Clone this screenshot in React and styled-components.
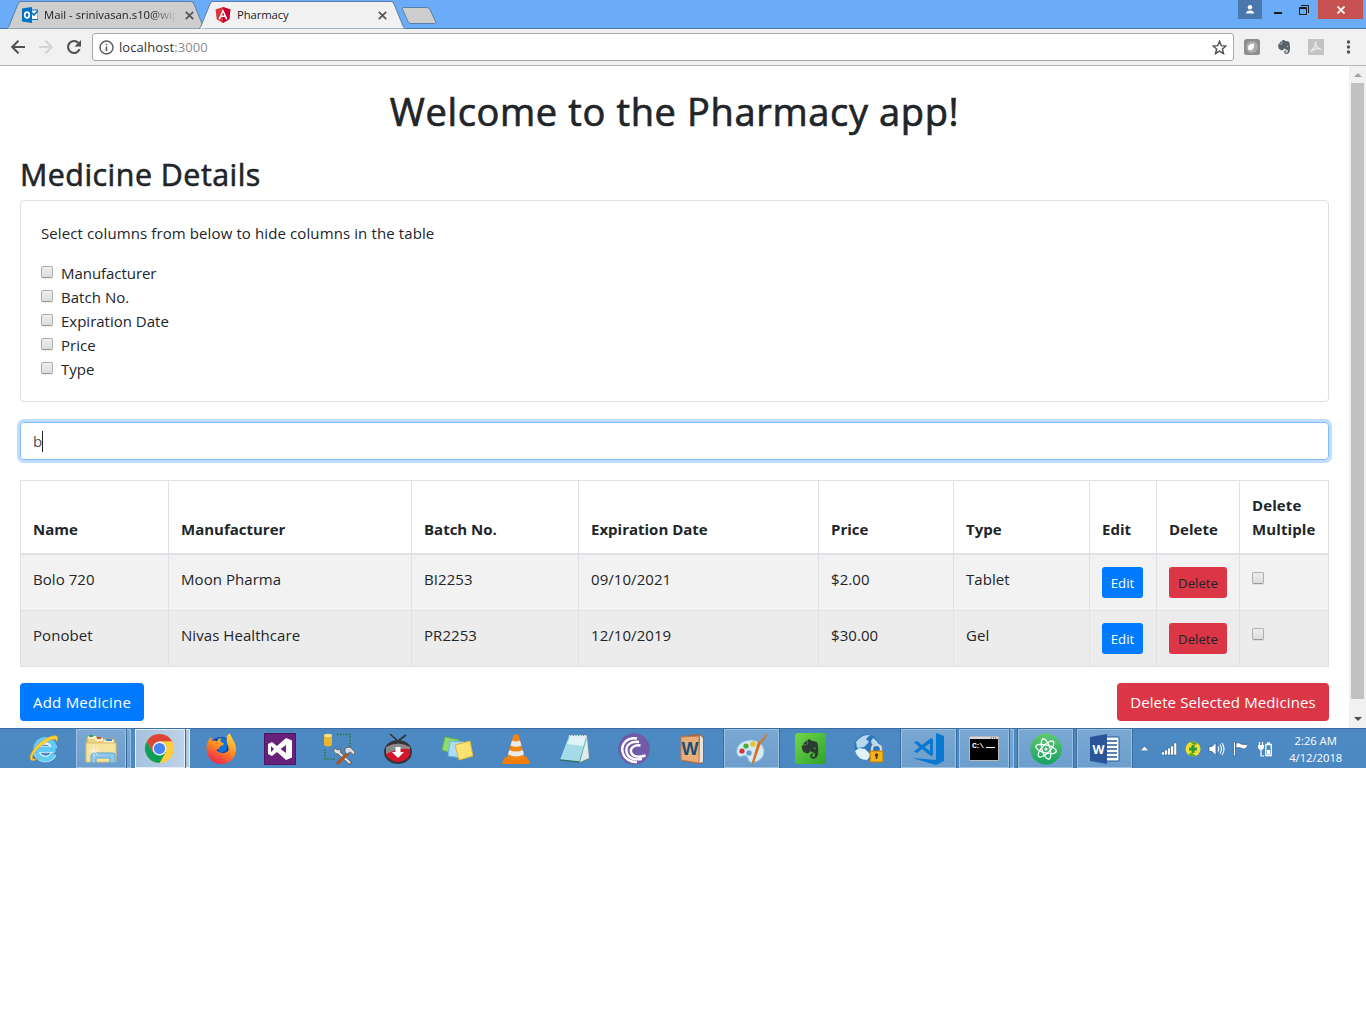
import React from 'react';
import styled, { createGlobalStyle, css } from 'styled-components';
import { FaEvernote } from 'react-icons/fa';

const Global = createGlobalStyle`
  * { box-sizing: border-box; }
  body { margin: 0; background: #fff; font-family: "Open Sans", "Noto Sans", sans-serif; font-size: 15px; line-height: 24px; color: #212529; }
  svg { display: block; flex: none; }
`;

const T = styled.span`
  letter-spacing: ${p => p.$ls || 0}px;
  white-space: nowrap;
`;

/* ---------- browser frame ---------- */
const Screen = styled.div`width: 1366px; height: 768px; display: flex; flex-direction: column; overflow: hidden;`;
const TabStrip = styled.div`height: 29px; background: #6aacf8; border-bottom: 1px solid #4a77ab; display: flex; padding-left: 7px;`;
const Tab = styled.div`
  display: grid; grid-template-columns: 100%; height: 29px; width: ${p => p.$w}px; margin-left: ${p => p.$ml || 0}px; z-index: ${p => (p.$active ? 2 : 1)};
  > * { grid-area: 1 / 1; }
`;
const TabContent = styled.div`
  display: flex; align-items: center; height: 29px; padding: 1px ${p => p.$pr}px 0 ${p => p.$pl}px; font-size: 11.3px; line-height: 16px; color: #222;
`;
const TabTitle = styled.div`
  flex: 1; min-width: 0; white-space: nowrap; margin: 0 8px 0 6px; letter-spacing: ${p => p.$ls || 0}px;
  ${p => p.$fade && css`-webkit-mask-image: linear-gradient(90deg, #000 80%, transparent 100%); mask-image: linear-gradient(90deg, #000 80%, transparent 100%);`}
`;
const NewTab = styled.div`margin: 7px 0 0 -4px; z-index: 3;`;
const WinControls = styled.div`margin-left: auto; display: flex; align-items: flex-start; padding-right: 3px;`;
const WinButton = styled.div`
  width: ${p => p.$w}px; height: 19px; background: ${p => p.$bg || 'transparent'}; display: flex; align-items: center; justify-content: center;
`;
const Toolbar = styled.div`height: 37px; background: #f1f1f1; border-bottom: 1px solid #b5b5b5; display: flex; align-items: center; padding: 0 10px;`;
const NavIcons = styled.div`display: flex; gap: 12px; margin-right: 10px;`;
const Omnibox = styled.div`
  flex: 1; height: 28px; background: #fff; border: 1px solid #a9a9a9; border-radius: 3px; display: flex; align-items: center; padding: 0 6px;
  font-size: 13px; color: #333; line-height: 18px;
`;
const Url = styled.div`flex: 1; margin-left: 5px; letter-spacing: ${p => p.$ls}px; span { color: #8a8a8a; }`;
const Extensions = styled.div`display: flex; align-items: center; gap: 16px; margin-left: 10px;`;

/* ---------- page ---------- */
const Viewport = styled.div`height: 662px; display: flex;`;
const Page = styled.main`width: 1349px; padding: 22px 20px 0; display: flex; flex-direction: column;`;
const Title = styled.h1`
  margin: 0; font-size: 38px; line-height: 46px; height: 48px; font-weight: 500; -webkit-text-stroke: .7px currentColor; text-align: center; letter-spacing: ${p => p.$ls}px;
`;
const Subtitle = styled.h2`margin: 20px 0 6px; font-size: 30.4px; line-height: 38px; font-weight: 500; -webkit-text-stroke: .6px currentColor; letter-spacing: ${p => p.$ls}px;`;
const Card = styled.section`height: 202px; border: 1px solid #dfdfdf; border-radius: 4px; padding: 20px;`;
const CardText = styled.p`margin: 0 0 16px;`;
const CheckRow = styled.label`display: flex; align-items: center; gap: 8px; height: 24px;`;
const Box = styled.span`
  width: 12px; height: 12px; margin-top: ${p => p.$mt || 0}px; border: 1px solid #b0b0b0; border-bottom-color: #9a9a9a; border-radius: 2px; flex: none; display: block;
  background: linear-gradient(#eee, #dcdcdc); box-shadow: 0 1px 0 rgba(0,0,0,.08);
`;
const Search = styled.div`
  height: 38px; margin: 20px 0; border: 1px solid #80bdff; border-radius: 4px; box-shadow: 0 0 0 3px #bfdeff;
  display: flex; align-items: center; padding: 0 12px; color: #495057;
`;
const Caret = styled.i`width: 1px; height: 21px; background: #222;`;
const Table = styled.table`
  width: 1309px; table-layout: fixed; border-collapse: separate; border-spacing: 0; border: 0 solid #dee2e6; border-width: 1px 1px 0 0;
`;
const Th = styled.th`
  height: 74px; padding: 12px 0 12px 12px; border-left: 1px solid #dee2e6; border-bottom: 2px solid #dee2e6; text-align: left; vertical-align: bottom; font-weight: 700;
`;
const Tr = styled.tr`background: ${p => (p.$hover ? '#ececec' : '#f2f2f2')};`;
const Td = styled.td`height: 56px; padding: 12px 0 0 12px; border-left: 1px solid #dee2e6; border-bottom: 1px solid #dee2e6; vertical-align: top;`;
const Button = styled.button`
  display: flex; align-items: center; justify-content: center; border: 0; padding: 0; font-family: inherit;
  width: ${p => p.$w}px; height: ${p => (p.$small ? 31 : 38)}px; border-radius: ${p => (p.$small ? 3 : 4)}px;
  font-size: ${p => (p.$small ? 13.2 : 15)}px; color: ${p => (p.$dark ? '#212529' : '#fff')}; background: ${p => (p.$danger ? '#dc3545' : '#007bff')};
`;
const Actions = styled.div`display: flex; justify-content: space-between; margin-top: 16px;`;
const Scrollbar = styled.div`width: 17px; background: #f1f1f1; display: flex; flex-direction: column; align-items: center;`;
const ScrollArrow = styled.div`height: ${p => p.$h}px; padding-top: ${p => p.$pt || 0}px; display: flex; align-items: center;`;
const Thumb = styled.div`width: 13px; height: 616px; background: #c1c1c1;`;

/* ---------- taskbar ---------- */
const Taskbar = styled.div`
  height: 40px; background: linear-gradient(#4c87bf, #4d8ac4 30%, #4b88c2); border-top: 1px solid #3a6ea5; display: flex; padding-left: 15px;
`;
const Slot = styled.div`flex: none; width: 58.92px; height: 39px; display: flex; align-items: center; justify-content: center;`;
const Frame = styled.div`
  width: 55px; height: 39px; border: 1px solid ${p => (p.$active ? '#e6eff8' : '#9dbfe0')}; outline: 1px solid #3b6c9e; outline-offset: 0;
  background: ${p => (p.$active ? 'linear-gradient(90deg,#a6c2de,#bdd2e8)' : 'linear-gradient(#7aa8d3,#6c9ecd)')};
  display: flex; align-items: center; justify-content: center;
`;
const Stack = styled.div`width: 55px; display: flex; gap: 1px; background: #3b6c9e;`;
const StackMain = styled(Frame)`width: 50px; outline: none;`;
const StackEdge = styled(Frame)`width: 4px; outline: none; border-left: 0;`;
const Tray = styled.div`display: flex; flex: none; align-items: center; gap: 7px; margin-left: 5.5px;`;
const Clock = styled.div`margin-left: 12px; flex: none; width: 60px; text-align: center; color: #fff; font-size: 11.3px; line-height: 17px; padding-top: 3px; letter-spacing: -.05px;`;

const TabShape = ({ w, fill }) => (
  <svg width={w} height="29" viewBox={`0 0 ${w} 29`}>
    <path d={`M0 28.5 Q1 28 2 26 L11 4 Q12 1.5 14 1.5 H${w - 14} Q${w - 12} 1.5 ${w - 11} 4 L${w - 2} 26 Q${w - 1} 28 ${w} 28.5 Z`} fill={fill} />
    <path d={`M0 28.5 Q1 28 2 26 L11 4 Q12 1.5 14 1.5 H${w - 14} Q${w - 12} 1.5 ${w - 11} 4 L${w - 2} 26 Q${w - 1} 28 ${w} 28.5`} fill="none" stroke="#5b7fa8" />
  </svg>
);
const CloseX = () => (
  <svg width="9" height="9" viewBox="0 0 9 9"><path d="M.8.8l7.4 7.4M8.2.8L.8 8.2" stroke="#555" strokeWidth="1.7" /></svg>
);
const Outlook = () => (
  <svg width="16" height="16" viewBox="0 0 16 16">
    <path d="M7 3h9v9.5H7z" fill="#fff" stroke="#0072c6" /><path d="M8 4l4 4 4-4.500" fill="none" stroke="#0072c6" strokeWidth="1.6" />
    <path d="M0 1.600L10 0v16L0 14.400z" fill="#0072c6" /><ellipse cx="5" cy="8" rx="2.300" ry="2.900" fill="none" stroke="#fff" strokeWidth="1.700" />
  </svg>
);
const Angular = () => (
  <svg width="16" height="16" viewBox="0 0 16 16">
    <path d="M8 0l7.400 2.600-1.100 9.700L8 16l-6.300-3.700L.6 2.600z" fill="#dd3338" /><path d="M8 0l7.400 2.600-1.100 9.700L8 16z" fill="#c3002f" />
    <path d="M8 2L3.400 12.200h1.700l1-2.300h3.800l1 2.300h1.700zm0 3.200l1.300 3.300H6.700z" fill="#fff" fillRule="evenodd" />
  </svg>
);
const Arrow = ({ color, flip }) => (
  <svg width="16" height="16" viewBox="0 0 16 16"><g transform={flip ? 'translate(16 0) scale(-1 1)' : undefined}><path d="M15 8H2.500M8.500 1.800L2.200 8l6.300 6.200" fill="none" stroke={color} strokeWidth="2" /></g></svg>
);
const Reload = () => (
  <svg width="16" height="16" viewBox="0 0 16 16"><path d="M13.600 10.200A6 6 0 1 1 12.400 3.900" fill="none" stroke="#505050" strokeWidth="2.100" /><path d="M15 1v6.500H8.500z" fill="#505050" /></svg>
);

/* ---------- taskbar icons ---------- */
const I = ({ children, w = 32, h = 32 }) => <svg width={w} height={h} viewBox="0 0 32 32">{children}</svg>;

const Ie = () => (
  <I>
    <path d="M26.500 16.500H8.500M8.500 17.500A9 9 0 0 0 25.500 21M8.500 15.500A9 9 0 0 1 26 15.500" fill="none" stroke="#dff6ff" strokeWidth="6.500" />
    <path d="M27.500 16.500H8.500M8.300 17.500A9 9 0 0 0 25.500 21M8.300 15.500A9 9 0 0 1 26.300 15.500" fill="none" stroke="#62cbf5" strokeWidth="5" />
    <path d="M4 27.500C-1 26 5 15 13 9 20 3.500 28 1 29.500 4c.5 1.500 0 3-.8 4.500C28.500 5 24 5.500 17.500 9.500 9 15 3 23 4.500 25.500c.8 1 2.500.8 5 0-2 1.300-4 2.200-5.500 2z" fill="#fbd23c" stroke="#e6a81c" strokeWidth=".7" />
  </I>
);
const Explorer = () => (
  <I>
    <path d="M2 4h10l2 2h15v22H2z" fill="#ecd283" stroke="#d2ad51" /><path d="M3 3h8v3H3z" fill="#f7edc5" /><path d="M4 2h4v2H4z" fill="#2fa84a" />
    <path d="M10 5h8v3h-8z" fill="#f7edc5" /><path d="M12 4h4v2h-4z" fill="#d44a3b" /><path d="M19 7h10v3H19z" fill="#f7edc5" /><path d="M21 6h6v2h-6z" fill="#3d8fd6" />
    <path d="M1 10h30v19H1z" fill="#f5e3a0" stroke="#dcbf66" /><path d="M6 30v-8q0-2 2-2h20q2 0 2 2v8h-5v-5H11v5z" fill="#92c9e9" stroke="#5fa3d0" />
    <path d="M9 12v12M3 18h12M5 14l8 8M13 14l-8 8" stroke="#fff" strokeWidth=".8" opacity=".8" />
  </I>
);
const Chrome = () => (
  <I w={31} h={31}>
    <circle cx="16" cy="16" r="15" fill="#ffcd40" />
    <path d="M3 8.500A15 15 0 0 0 16 31l6.500-11.200L16 16 9.500 19.800z" fill="#0f9d58" />
    <path d="M3 8.500A15 15 0 0 1 29 8.500H16L9.500 19.800z" fill="#db4437" /><circle cx="16" cy="16" r="7.200" fill="#f1f1f1" /><circle cx="16" cy="16" r="5.800" fill="#4285f4" />
  </I>
);
const Firefox = () => (
  <I>
    <defs><linearGradient id="fx" x1=".8" y1="0" x2=".3" y2="1"><stop offset="0" stopColor="#ffdd3c" /><stop offset=".5" stopColor="#ff8b20" /><stop offset="1" stopColor="#ed1f53" /></linearGradient></defs>
    <circle cx="16" cy="16" r="12" fill="#153a9f" /><path d="M12 5q8-2 11 5l-2 8-7 3z" fill="#0a75d8" />
    <path d="M1.500 14C2 9 4 6 6 4l1 4c2-.8 3.500-.7 5 .5 1-1.800 2-2.800 4-3.500-1 2-1 3.500 1 4.500l2 1c0 2-4 2.200-4.500 4 0 2-2 2-3 2 1 4 8 5 12 1 1-4-4-9-1-15 .5-1 1.300-1.800 2.500-2C26 5 31 9 31 16.500 31 25 24.500 31 16 31S1 24 1.500 14z" fill="url(#fx)" />
  </I>
);
const VisualStudio = () => (
  <I><path d="M.5.5h31v31H.5z" fill="#68217a" stroke="#4d1461" /><path d="M22 5l6 2.500v17L22 27l-9-8-5 4-4-2V11l4-2 5 4zM22 12l-5.500 4L22 20zM7 13v6l3-3z" fill="#fff" fillRule="evenodd" /></I>
);
const Tools = () => (
  <I>
    <path d="M14 1.500h13V14M2 16v10h10" fill="none" stroke="#277b2c" strokeWidth="1.500" strokeDasharray="1.500 1.500" />
    <path d="M1 2v10q4 3 8 0V2z" fill="#eab52c" /><ellipse cx="5" cy="2.500" rx="4" ry="1.800" fill="#ffe387" />
    <path d="M14 18l14 13" stroke="#666" strokeWidth="4" /><path d="M12 15q-3 4 2 6l3-1 1-4-3 1-2-1z" fill="#dfe5ea" stroke="#666" /><path d="M15 19l12 11" stroke="#e8ecef" strokeWidth="2" />
    <path d="M25 20L14 31" stroke="#a9572b" strokeWidth="3.300" /><path d="M22 15l5-1 5 5-1 3-4-3-3 2-2-2z" fill="#d9dfe3" stroke="#666" />
  </I>
);
const Ytd = () => (
  <I>
    <path d="M8 1l8 7 8-6" fill="none" stroke="#333" strokeWidth="1.600" /><ellipse cx="16" cy="19" rx="14" ry="12" fill="#353535" />
    <path d="M4 14q12-6 24 0v8q-5 7-12 7T4 22z" fill="#d4152c" /><path d="M4 14q12-7 24 0v2Q16 15 4 21z" fill="#8a8a8a" />
    <path d="M13.500 14h5v5h3.500l-6 6-6-6h3.500z" fill="#fff" />
  </I>
);
const Sticky = () => (
  <I>
    <path d="M4 4l14 3-4 14L1 17z" fill="#8fdc71" stroke="#62b84a" /><path d="M9 8l14 1-2 16-14-2z" fill="#a9dcf6" stroke="#6eb7de" /><path d="M14 12l15-4 3 15-14 4z" fill="#fbe373" stroke="#d6b53d" />
  </I>
);
const Vlc = () => (
  <I>
    <path d="M5 24h22l3 6q0 1-1 1H3q-1 0-1-1z" fill="#f07d0a" /><path d="M13.500 2q2.500-1.500 5 0L25 25q-9 5-18 0z" fill="#f28411" />
    <path d="M12 7.500q4 2 8 0l1.500 5q-5.500 2.500-11 0zM9.300 17q6.700 3 13.400 0l1.300 4.500q-8 4-16 0z" fill="#e9eaec" />
  </I>
);
const Notepad = () => (
  <I>
    <path d="M9 2h19l3 24-10 4z" fill="#5d8f8d" /><path d="M10 3h18L20 29 1 27z" fill="#a5dcea" /><path d="M12 3h15l-3 10L8 11z" fill="#dff4f9" /><path d="M28 4l2 21-9 4z" fill="#dfeceb" />
    <path d="M10 3.500h18" stroke="#e8e8e8" strokeWidth="3" strokeDasharray="1.500 1" /><path d="M1 27l19 2" stroke="#2f6f66" strokeWidth="1.500" />
  </I>
);
const BitTorrent = () => (
  <I>
    <circle cx="16" cy="16" r="15.800" fill="#6f5ba7" />
    <g fill="none" stroke="#fff" strokeWidth="2.400"><path d="M19 5.500C9 4 3 11 4.500 18.500S13 29.500 19 29" /><path d="M21 9C13 7.500 7.500 12.500 8.500 18.500s6.500 9 15.500 7.500" /><path d="M22.500 12.500c-6-1-10.500 2.500-9.500 6.500 1 4.500 7 6 14.500 3.500" /></g>
  </I>
);
const WordBook = () => (
  <I>
    <path d="M5 3l19-2 4 3v25l-5 2-17-3z" fill="#9b613e" /><path d="M24 2l3 3v24l-4 1z" fill="#e9e3d9" /><path d="M5 4l18-1v27L5 27z" fill="#e8ad79" stroke="#bd7a4d" />
    <text x="14" y="21.500" textAnchor="middle" fontSize="18" fontWeight="700" fontFamily="Liberation Sans, sans-serif" fill="#174d78" textLength="17" lengthAdjust="spacingAndGlyphs">W</text>
  </I>
);
const Paint = () => (
  <I>
    <path d="M2 21C0 12 8 7 16 7s14 6 13 13-10 11-14 9c-3-2-1-5-4-6s-7 3-9-2z" fill="#d3ebf6" stroke="#8bbbd5" />
    <circle cx="7" cy="18" r="2.600" fill="#d73537" /><circle cx="11" cy="13" r="2.600" fill="#4cac38" /><circle cx="18" cy="11" r="2.800" fill="#e8c52c" /><circle cx="14" cy="20" r="2.700" fill="#6a9dce" />
    <path d="M26 10l-7 20q-2 2-2-1l6-21z" fill="#d77422" /><path d="M24 9L32 0q1 5-5 10z" fill="#b98253" />
  </I>
);
const EvernoteTile = styled.div`
  width: 31px; height: 31px; border-radius: 3px; background: linear-gradient(135deg,#72d648,#2da22c); color: #2e3b34; display: flex; align-items: center; justify-content: center; font-size: 22px;
`;
const Globe = () => (
  <I>
    <circle cx="14" cy="14" r="12.500" fill="#2d76ba" /><path d="M3 9q6-8 14-7l-4 4 3 3-5 5-7 1zM20 5q5 3 6 8l-4-2-3 1-1-4z" fill="#b9d8ee" />
    <path d="M2 18q3 9 12 9l4-5-6-6-6-1z" fill="#e3f1fa" /><path d="M19 19v-3q0-4 4.500-4t4.500 4v3" fill="none" stroke="#d9dcdf" strokeWidth="2.200" /><path d="M17 18h13v11H17z" fill="#f2b31d" stroke="#ba7a0d" /><circle cx="23.500" cy="22" r="1.700" fill="#563908" /><path d="M23.500 22v4" stroke="#563908" strokeWidth="1.600" />
  </I>
);
const VsCode = () => (
  <I>
    <path d="M24 0l8 3v25l-8 4L0 25l24 2z" fill="#0879cf" />
    <path d="M19 5l2 1v16l-2 1-9-7-5 4-3-1.500L7.500 14 2 9.500 5 8l5 4zM18 10.500L12.500 14l5.500 4z" fill="#0879cf" fillRule="evenodd" />
  </I>
);
const Cmd = () => (
  <svg width="30" height="25" viewBox="0 0 30 25">
    <path d="M.5.5h29v24H.5z" fill="#000" stroke="#b9b9b9" /><path d="M1 1h28v2H1z" fill="#d9d9d9" /><path d="M22 2h6" stroke="#444" strokeDasharray="1 1" />
    <text x="3" y="12" fontSize="8" fontFamily="Liberation Mono, monospace" fontWeight="700" fill="#fff" textLength="12">C:\</text><path d="M17 11.500h9" stroke="#fff" />
  </svg>
);
const Atom = () => (
  <I>
    <defs><linearGradient id="at" x1="0" y1="0" x2="0" y2="1"><stop offset="0" stopColor="#62c774" /><stop offset="1" stopColor="#16a25e" /></linearGradient></defs>
    <circle cx="16" cy="16" r="15.700" fill="url(#at)" />
    <g fill="none" stroke="#fff" strokeWidth="1.200"><ellipse cx="16" cy="16" rx="10.500" ry="4" transform="rotate(14 16 16)" /><ellipse cx="16" cy="16" rx="10.500" ry="4" transform="rotate(74 16 16)" /><ellipse cx="16" cy="16" rx="10.500" ry="4" transform="rotate(134 16 16)" /></g>
    <circle cx="16" cy="16" r="1.500" fill="#fff" />
  </I>
);
const Word = () => (
  <I>
    <path d="M16 4h14v24H16z" fill="#fff" stroke="#2a5699" /><path d="M18 8h10M18 12h10M18 16h10M18 20h10M18 24h10" stroke="#2a5699" strokeWidth="1.600" /><path d="M1 4L18 1v30L1 28z" fill="#2a5699" />
    <text x="9.500" y="20.500" textAnchor="middle" fontSize="13" fontWeight="700" fontFamily="Open Sans, sans-serif" fill="#fff" textLength="12" lengthAdjust="spacingAndGlyphs">W</text>
  </I>
);

const apps = [
  { icon: <Ie /> }, { icon: <Explorer />, stack: true }, { icon: <Chrome />, stack: true, active: true }, { icon: <Firefox /> }, { icon: <VisualStudio /> },
  { icon: <Tools /> }, { icon: <Ytd /> }, { icon: <Sticky /> }, { icon: <Vlc /> }, { icon: <Notepad /> }, { icon: <BitTorrent /> }, { icon: <WordBook /> },
  { icon: <Paint />, open: true }, { icon: <EvernoteTile><FaEvernote /></EvernoteTile> }, { icon: <Globe /> }, { icon: <VsCode />, open: true },
  { icon: <Cmd />, stack: true }, { icon: <Atom />, open: true }, { icon: <Word />, open: true },
];

const TaskItem = ({ app }) => (
  <Slot>
    {app.stack ? <Stack><StackMain $active={app.active}>{app.icon}</StackMain><StackEdge $active={app.active} /></Stack>
      : app.open ? <Frame>{app.icon}</Frame> : app.icon}
  </Slot>
);

const TrayIcons = () => (
  <Tray>
    <svg width="9" height="5" viewBox="0 0 9 5"><path d="M4.500.3L8.600 4.700H.4z" fill="#fff" stroke="#3a6793" strokeWidth=".5" /></svg>
    <svg width="22" height="16" viewBox="-4 0 22 16">
      {[3, 5, 7, 9, 12].map((h, i) => <rect key={h} x={1.5 + i * 3.1} y={14 - h} width="2.800" height={h} fill="#fff" stroke="#2f587f" strokeWidth=".5" />)}
    </svg>
    <svg width="16" height="16" viewBox="0 0 16 16"><circle cx="8" cy="8" r="7.500" fill="#f3de2f" /><path d="M5 1a7.500 7.500 0 0 1 8 2L9 4zM11 15a7.500 7.500 0 0 1-8-2l4-1z" fill="#55a82e" /><path d="M8 4v8M4 8h8" stroke="#2e9d34" strokeWidth="3" /></svg>
    <svg width="17" height="16" viewBox="0 0 17 16"><path d="M1 5.500h3l4-4v13l-4-4H1z" fill="#fff" stroke="#2f587f" strokeWidth=".7" /><path d="M10 5.500q1.500 2.500 0 5M12 3.500q3 4.500 0 9M14 2q4 6 0 12" fill="none" stroke="#fff" strokeWidth="1.100" /></svg>
    <svg width="17" height="16" viewBox="0 0 17 16"><path d="M1.500 1h2v14h-2z" fill="#fff" stroke="#2f587f" strokeWidth=".7" /><path d="M4 2q3-1 5 1 3 1 7 0-1 5-4 5-2 0-3-1-2-1-5 0z" fill="#fff" stroke="#2f587f" strokeWidth=".7" /></svg>
    <svg width="18" height="16" viewBox="-1 0 18 16"><path d="M2.500 1v4M5.500 1v4M4 8v7h3" stroke="#fff" strokeWidth="1.200" fill="none" /><path d="M1 4h6v3L5 9H3L1 7z" fill="#fff" /><path d="M8.800 3.500h5.500v11H8.800zM10 2h3" fill="none" stroke="#fff" strokeWidth="1.300" /><path d="M10 9h3v4.500h-3z" fill="#fff" /></svg>
  </Tray>
);

const filters = [['Manufacturer', -0.05], ['Batch No.', 0.05], ['Expiration Date', 0], ['Price', 0], ['Type', 0]];
const widths = [148, 243, 167, 240, 135, 136, 67, 83, 89];
const heads = ['Name', 'Manufacturer', 'Batch No.', 'Expiration Date', 'Price', 'Type', 'Edit', 'Delete'];
const rows = [
  ['Bolo 720', 'Moon Pharma', 'BI2253', '09/10/2021', '$2.00', 'Tablet'],
  ['Ponobet', 'Nivas Healthcare', 'PR2253', '12/10/2019', '$30.00', 'Gel'],
];

export default function App() {
  return (
    <Screen>
      <Global />
      <TabStrip>
        <Tab $w={198}>
          <TabShape w={198} fill="#cecece" />
          <TabContent $pl={15} $pr={11}><Outlook /><TabTitle $fade $ls={0}>Mail - srinivasan.s10@wip</TabTitle><CloseX /></TabContent>
        </Tab>
        <Tab $w={206} $ml={-6} $active>
          <TabShape w={206} fill="#f1f1f1" />
          <TabContent $pl={16} $pr={18}><Angular /><TabTitle $ls={-0.1}>Pharmacy</TabTitle><CloseX /></TabContent>
        </Tab>
        <NewTab><svg width="36" height="18" viewBox="0 0 36 18"><path d="M2.500.5H26q2 0 3 2l5.500 12q1 2-1 2H10q-2 0-3-2L1.500 2.500q-1-2 1-2z" fill="#cecece" stroke="#5b7fa8" /></svg></NewTab>
        <WinControls>
          <WinButton $w={24} $bg="#4a77ae"><svg width="10" height="10" viewBox="0 0 10 10"><circle cx="5" cy="2.300" r="2.200" fill="#fff" /><path d="M1 8.500Q1 5.500 5 5.500t4 3z" fill="#fff" /></svg></WinButton>
          <WinButton $w={32}><svg width="8" height="10" viewBox="0 0 8 10"><path d="M0 7h8v2H0z" fill="#1c1c1c" /></svg></WinButton>
          <WinButton $w={20}><svg width="10" height="10" viewBox="0 0 10 10"><path d="M.5 2.500h7v7h-7zM.5 3.500h7M2 .5h7.500V8" fill="none" stroke="#1c1c1c" /></svg></WinButton>
          <WinButton $w={4} />
          <WinButton $w={45} $bg="#c75050"><svg width="8" height="8" viewBox="0 0 8 8"><path d="M.5.5l7 7M7.500.5l-7 7" stroke="#fff" strokeWidth="1.700" /></svg></WinButton>
        </WinControls>
      </TabStrip>
      <Toolbar>
        <NavIcons><Arrow color="#505050" /><Arrow color="#d3d3d3" flip /><Reload /></NavIcons>
        <Omnibox>
          <svg width="15" height="15" viewBox="0 0 15 15"><circle cx="7.500" cy="7.500" r="6.500" fill="none" stroke="#5a5a5a" strokeWidth="1.400" /><path d="M7.500 6.500V11M7.500 3.700v1.600" stroke="#5a5a5a" strokeWidth="1.600" /></svg>
          <Url $ls={0.08}>localhost<span>:3000</span></Url>
          <svg width="15" height="15" viewBox="0 0 15 15"><path d="M7.500 1.300l1.800 4.300 4.700.4-3.600 3 1.100 4.600-4-2.500-4 2.500 1.100-4.600L1 6l4.700-.4z" fill="none" stroke="#505050" strokeWidth="1.400" /></svg>
        </Omnibox>
        <Extensions>
          <svg width="16" height="16" viewBox="0 0 16 16"><rect width="16" height="16" rx="2.500" fill="#8d8d8d" /><circle cx="8" cy="8" r="6" fill="#aaa" /><path d="M4 9q0-4.500 6-4.500 1 5-3 7-3 0-3-2.500z" fill="#fff" /></svg>
          <svg width="16" height="16" viewBox="0 0 16 16" color="#56646a"><FaEvernote size={16} /></svg>
          <svg width="16" height="16" viewBox="0 0 16 16"><path d="M0 0h16v16H0z" fill="#c3c3c3" /><path d="M7.500 2.500q1.500 4-4.500 10M7.500 3q0 6 6 7.500M3 12q4-3 10-2" fill="none" stroke="#f2f2f2" strokeWidth="1.200" /></svg>
          <svg width="16" height="16" viewBox="0 0 16 16"><g fill="#505050"><circle cx="8.500" cy="3" r="1.700" /><circle cx="8.500" cy="8" r="1.700" /><circle cx="8.500" cy="13" r="1.700" /></g></svg>
        </Extensions>
      </Toolbar>
      <Viewport>
        <Page>
          <Title $ls={0.64}>Welcome to the Pharmacy app!</Title>
          <Subtitle $ls={0.48}>Medicine Details</Subtitle>
          <Card>
            <CardText><T $ls={0.11}>Select columns from below to hide columns in the table</T></CardText>
            {filters.map(([f, ls]) => <CheckRow key={f}><Box $mt={-3} /><T $ls={ls}>{f}</T></CheckRow>)}
          </Card>
          <Search>b<Caret /></Search>
          <Table>
            <colgroup>{widths.map((w, i) => <col key={i} width={w} />)}</colgroup>
            <thead><tr>{heads.map(h => <Th key={h}><T>{h}</T></Th>)}<Th><T $ls={0.1}>Delete<br />Multiple</T></Th></tr></thead>
            <tbody>
              {rows.map((r, i) => (
                <Tr key={i} $hover={i === 1}>
                  {r.map(c => <Td key={c}><T $ls={0.06}>{c}</T></Td>)}
                  <Td><Button $small $w={41}>Edit</Button></Td>
                  <Td><Button $small $danger $dark $w={58}>Delete</Button></Td>
                  <Td><Box $mt={5} /></Td>
                </Tr>
              ))}
            </tbody>
          </Table>
          <Actions>
            <Button $w={124}><T $ls={0.25}>Add Medicine</T></Button>
            <Button $w={212} $danger><T $ls={0.12}>Delete Selected Medicines</T></Button>
          </Actions>
        </Page>
        <Scrollbar>
          <ScrollArrow $h={17}><svg width="8" height="4" viewBox="0 0 8 4"><path d="M4 0l4 4H0z" fill="#a3a3a3" /></svg></ScrollArrow>
          <Thumb />
          <ScrollArrow $h={29} $pt={11}><svg width="8" height="4" viewBox="0 0 8 4"><path d="M0 0h8L4 4z" fill="#505050" /></svg></ScrollArrow>
        </Scrollbar>
      </Viewport>
      <Taskbar>
        {apps.map((a, i) => <TaskItem key={i} app={a} />)}
        <TrayIcons />
        <Clock>2:26 AM<br />4/12/2018</Clock>
      </Taskbar>
    </Screen>
  );
}
